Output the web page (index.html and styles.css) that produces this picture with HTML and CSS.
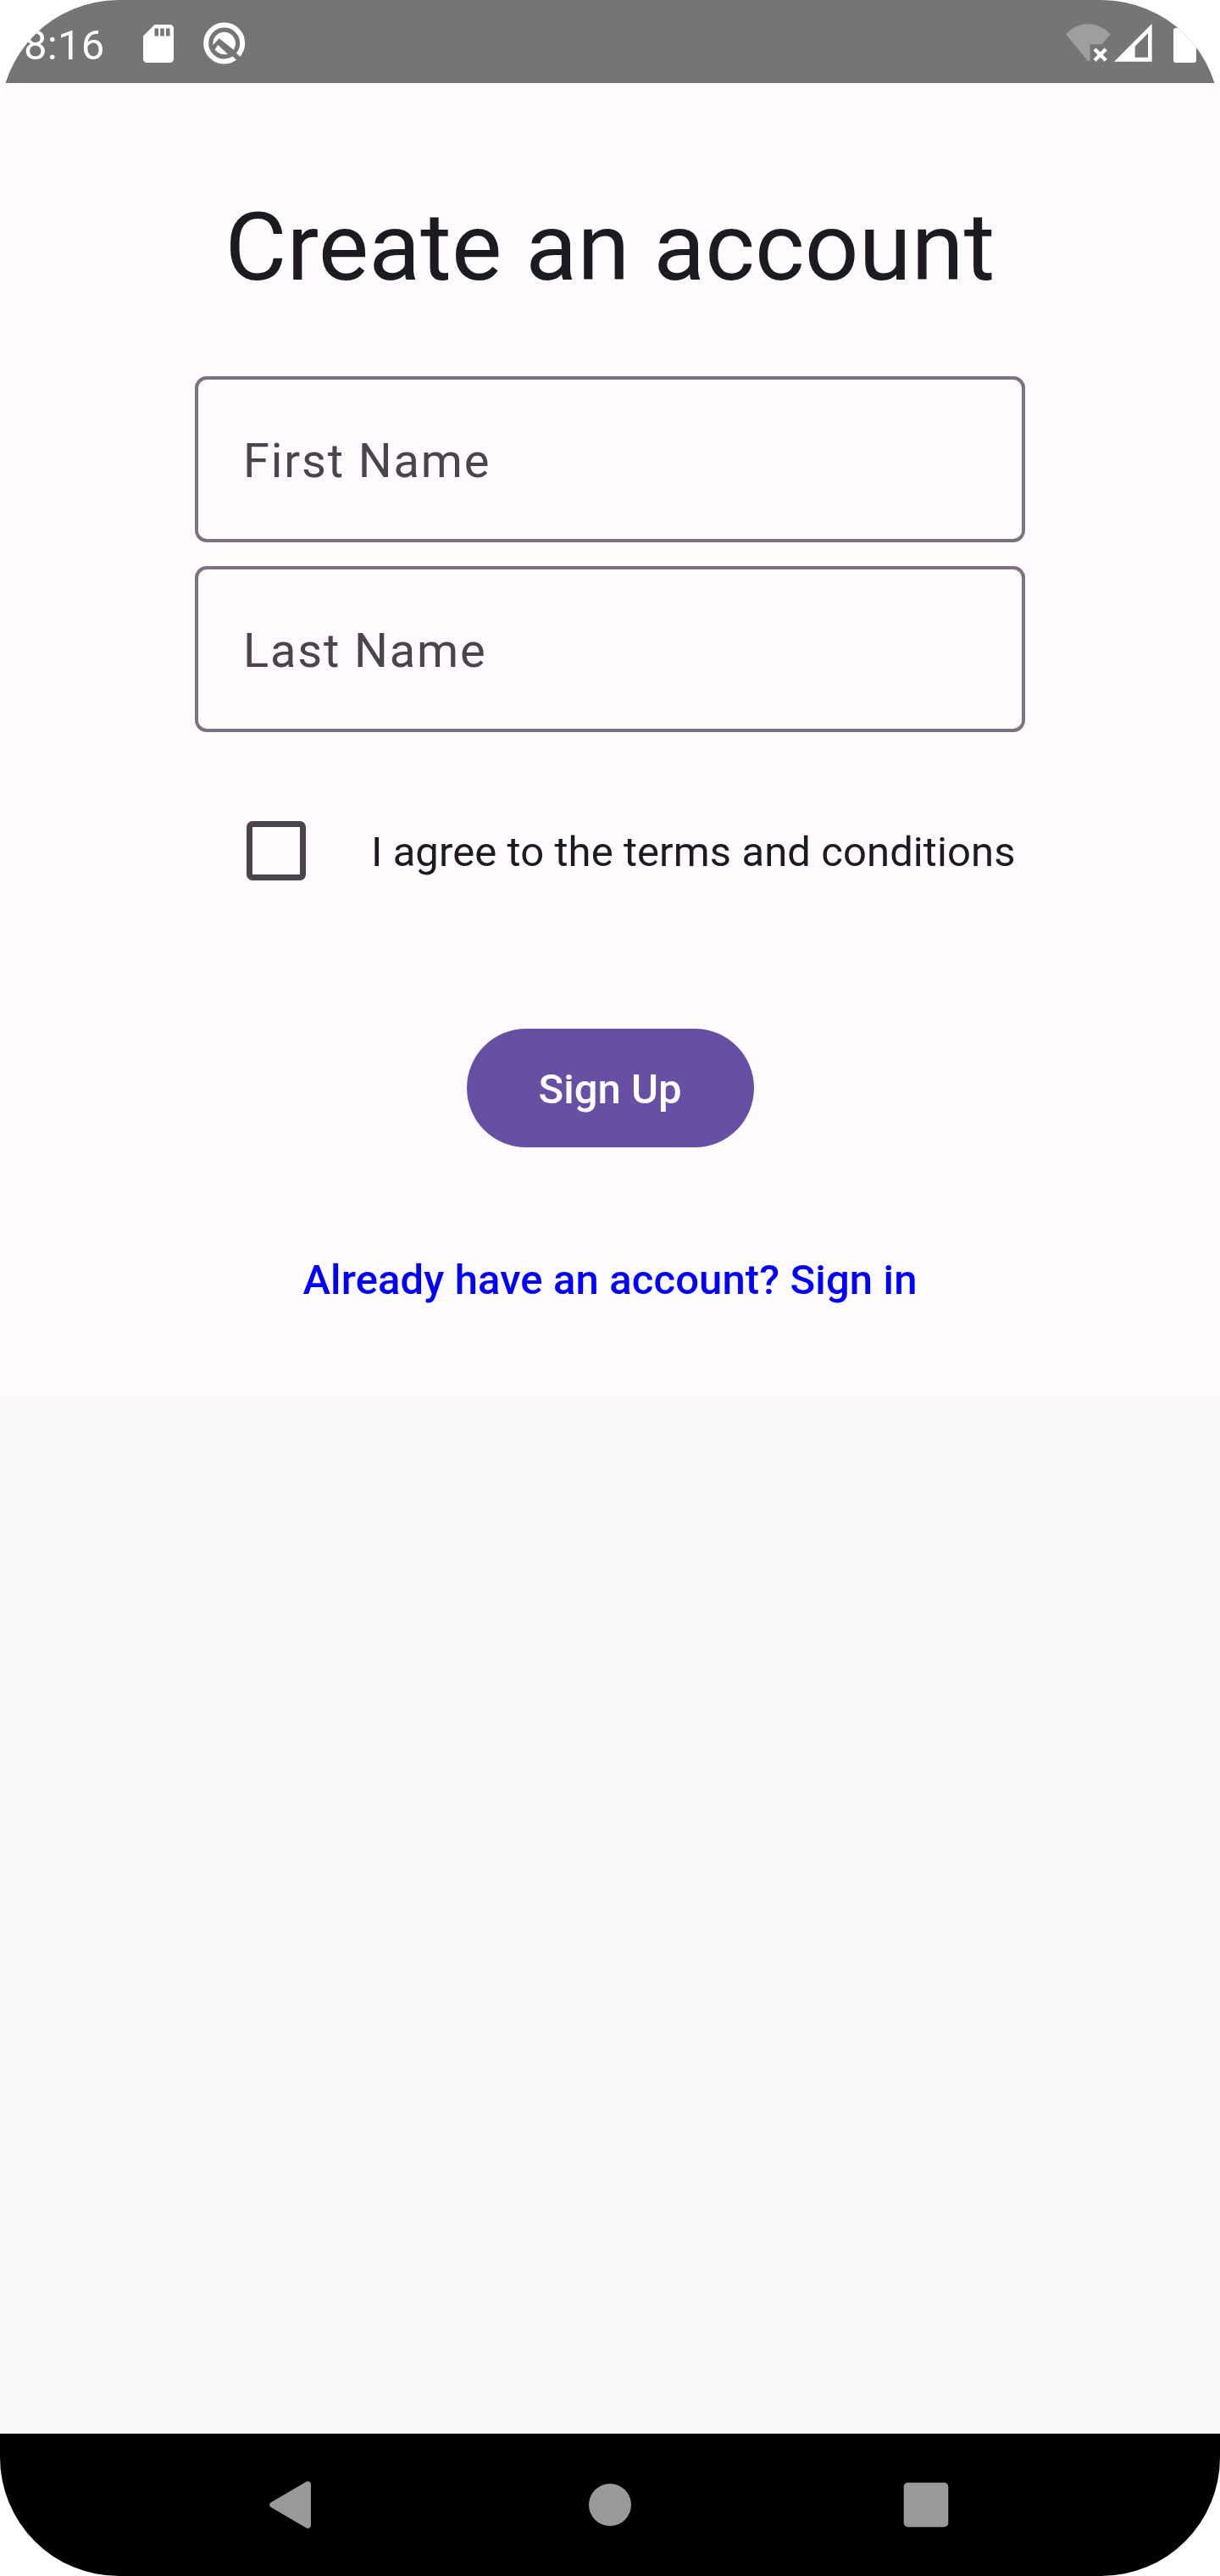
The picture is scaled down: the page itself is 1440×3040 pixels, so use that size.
FILE: index.html
```html
<!DOCTYPE html>
<html lang="en">
<head>
<meta charset="utf-8">
<title>Create an account</title>
<link rel="stylesheet" href="styles.css">
</head>
<body>
<div class="screen">
  <header class="status-bar">
    <span class="clock">8:16</span>
    <svg class="icon-sd" viewBox="0 0 36 45" width="36" height="45" aria-hidden="true">
      <path fill="#fff" fill-rule="evenodd" d="M13.5 0H31.5A4.5 4.5 0 0 1 36 4.5V40.5A4.5 4.5 0 0 1 31.5 45H4.5A4.5 4.5 0 0 1 0 40.5V13.5ZM13.5 4.5V13.5H18V4.5ZM20.25 4.5V13.5H24.75V4.5ZM27 4.5V13.5H31.5V4.5Z"/>
    </svg>
    <svg class="icon-q" viewBox="0 0 150 150" width="50" height="50" aria-hidden="true">
      <circle cx="74" cy="75" r="64.5" fill="none" stroke="#fff" stroke-width="18"/>
      <path d="M88 93L142 147" stroke="#757575" stroke-width="17"/>
      <path fill="#fff" d="M34 77A40 40 0 1 1 107 98L56 58L35 81Z"/>
      <path fill="#fff" d="M52 81L86 113A40 40 0 0 1 41 97Z"/>
    </svg>
    <svg class="icon-wifi" viewBox="0 0 160 136" width="53.33" height="45.33" aria-hidden="true">
      <path fill="#9e9e9e" d="M0 37Q34 1 79 1T158 37L128 73H86V128L79 133Z"/>
      <path d="M102 90L142 130M142 90L102 130" stroke="#fff" stroke-width="13"/>
    </svg>
    <svg class="icon-cell" viewBox="0 0 134 134" width="44.67" height="44.67" aria-hidden="true">
      <path fill="#fff" fill-rule="evenodd" d="M134 0V134H0ZM120 34L74 80V119H120Z"/>
    </svg>
    <span class="battery"></span>
  </header>
  <main class="form">
    <h1 class="title">Create an account</h1>
    <div class="field">First Name</div>
    <div class="field">Last Name</div>
    <label class="terms"><span class="checkbox"></span><span class="terms-text">I agree to the terms and conditions</span></label>
    <button class="signup" type="button">Sign Up</button>
    <a class="signin">Already have an account? Sign in</a>
  </main>
  <nav class="nav-bar">
    <svg viewBox="0 0 56 56" width="56" height="56" aria-hidden="true"><path fill="#999" d="M1 25L42.500 .7C45 -.7 48 1 48 4V52C48 55 45 56.700 42.500 55.300L1 31C-1.500 29.500 -1.500 26.500 1 25Z"/></svg>
    <svg viewBox="0 0 56 56" width="56" height="56" aria-hidden="true"><circle cx="28" cy="28" r="25" fill="#999"/></svg>
    <svg viewBox="0 0 56 56" width="56" height="56" aria-hidden="true"><rect x="1.700" y="1.700" width="52.600" height="52.600" rx="5" fill="#999"/></svg>
  </nav>
</div>
</body>
</html>
```
FILE: styles.css
```css
* { box-sizing: border-box; }
body { margin: 0; background: #fff; font-family: Roboto, sans-serif; }

.screen {
  display: flex;
  flex-direction: column;
  width: 1440px;
  height: 3040px;
  border-radius: 140px;
  overflow: hidden;
  background: #fafafa;
}

.status-bar {
  display: flex;
  align-items: flex-start;
  flex: none;
  height: 98px;
  padding-left: 28px;
  background: #757575;
}
.clock { width: 141.300px; margin-top: 25px; font-size: 49px; line-height: 57px; letter-spacing: .3px; color: #fff; }
.icon-sd { margin-top: 29px; }
.icon-q { margin: 26px 0 0 34.300px; }
.icon-wifi { margin: 28px 0 0 968.700px; }
.icon-cell { margin: 28.330px 0 0 3.700px; }
.battery { width: 27px; height: 41px; margin: 32.700px 0 0 25px; border-radius: 3px; background: #fff; }

.form {
  display: flex;
  flex-direction: column;
  align-items: center;
  flex: none;
  height: 1550px;
  background: #fffbfe;
  color: #1c1b1f;
}
.title { margin: 128px 0 86px; font-size: 112px; font-weight: 400; line-height: 132px; letter-spacing: .12px; }
.field {
  display: flex;
  align-items: center;
  width: 980px;
  height: 196px;
  margin-bottom: 28px;
  padding: 4px 0 0 53px;
  border: 4px solid #79747e;
  border-radius: 14px;
  font-size: 56px;
  letter-spacing: 1.850px;
  color: #49454f;
}
.terms { display: flex; align-items: center; gap: 77px; width: 980px; height: 70px; margin-top: 77px; padding-left: 61px; font-size: 49px; letter-spacing: .08px; white-space: nowrap; }
.terms-text { padding-top: 3px; }
.checkbox { flex: none; width: 70px; height: 70px; border: 7px solid #49454f; border-radius: 7px; }
.signup {
  width: 339px;
  height: 140px;
  margin: 175px 0 124px;
  padding: 4px 0 0;
  border: 0;
  border-radius: 70px;
  background: #6750a4;
  color: #fff;
  font: 500 49px/70px Roboto, sans-serif;
}
.signin { font-size: 49px; font-weight: 500; line-height: 66px; letter-spacing: .12px; color: #00f; }

.nav-bar {
  display: flex;
  justify-content: center;
  align-items: center;
  gap: 317px;
  height: 168px;
  margin-top: auto;
  background: #000;
}
.nav-bar svg { overflow: visible; }
```
